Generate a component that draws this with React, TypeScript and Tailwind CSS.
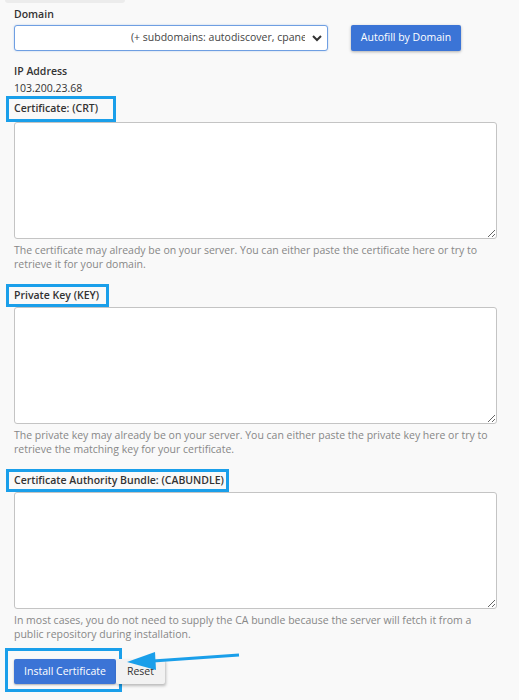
import React from 'react';

const font = { fontFamily: '"Open Sans", "Liberation Sans", sans-serif' };

interface FieldProps {
  label: string;
  boxClass: string;
  help: string[];
}

const Field: React.FC<FieldProps> = ({ label, boxClass, help }) => {
  return (
    <div>
      {/* highlighted label, drawn like the annotation in the screenshot */}
      <div className={`-ml-2 flex items-center whitespace-nowrap border-[3px] border-[#1a9fea] pl-[5px] text-[10.5px] font-semibold text-[#333] ${boxClass}`}>
        {label}
      </div>
      <textarea className="block w-[483px] h-[117px] bg-white border border-[#c4c4c4] rounded-[3px]" />
      <p className="mt-[4px] text-[10.5px] leading-[14px] text-[#878787] whitespace-nowrap">
        {help[0]}
        <br />
        {help[1]}
      </p>
    </div>
  );
};

const App: React.FC = () => {
  return (
    <div className="min-h-[700px] w-[519px] bg-[#f9f9f9] overflow-hidden" style={font}>
      <div className="ml-[5px] w-[120px] h-[3px] bg-[#ececec] rounded-b-md" />

      <div className="px-[14px]">
        <div className="mt-[3px] text-[10.5px] leading-[16px] font-semibold text-[#333]">Domain</div>

        <div className="mt-[3px] flex items-center gap-[23px]">
          <div className="w-[314px] h-[26px] flex items-center bg-white border border-[#6f9fe2] rounded-[3px] shadow-[0_0_2px_rgba(80,140,220,0.4)] text-[10.5px] text-[#444] overflow-hidden">
            <span className="w-[116px] shrink-0" />
            <span className="whitespace-nowrap overflow-hidden w-[174px]">(+ subdomains: autodiscover, cpanel, mail, webmail)</span>
            <svg width="12" height="12" viewBox="0 0 12 12" className="ml-auto mr-[4px] shrink-0">
              <path d="M2 4 L6 8 L10 4" fill="none" stroke="#333" strokeWidth="2" />
            </svg>
          </div>
          <button className="h-[26px] w-[110px] bg-[#3b74d6] text-white text-[10.5px] rounded-[2px] shadow-[0_1px_3px_rgba(0,0,0,0.3)]">
            Autofill by Domain
          </button>
        </div>

        <div className="mt-[12px] text-[10.5px] leading-[16px] font-semibold text-[#333]">IP Address</div>
        <div className="mt-[1px] text-[10.5px] leading-[16px] text-[#333]">103.200.23.68</div>

        <div className="mt-0 flex flex-col gap-[13px]">
          <Field
            label="Certificate: (CRT)"
            boxClass="w-[110px] h-[26px]"
            help={[
              'The certificate may already be on your server. You can either paste the certificate here or try to',
              'retrieve it for your domain.',
            ]}
          />
          <Field
            label="Private Key (KEY)"
            boxClass="w-[103px] h-[23px]"
            help={[
              'The private key may already be on your server. You can either paste the private key here or try to',
              'retrieve the matching key for your certificate.',
            ]}
          />
          <Field
            label="Certificate Authority Bundle: (CABUNDLE)"
            boxClass="w-[223px] h-[23px]"
            help={[
              'In most cases, you do not need to supply the CA bundle because the server will fetch it from a',
              'public repository during installation.',
            ]}
          />
        </div>

        <div className="relative mt-[7px] flex items-center">
          <div className="-ml-[9px] border-[3px] border-[#1a9fea] pl-[6px] pr-[3px] pt-[8px] pb-[5px]">
            <button className="block h-[25px] w-[102px] bg-[#3b74d6] text-white text-[10.5px] rounded-[2px] shadow-[0_1px_2px_rgba(0,0,0,0.3)]">
              Install Certificate
            </button>
          </div>
          <button className="-ml-[6px] mt-[3px] h-[25px] w-[49px] bg-[#f2f2f2] text-[#333] text-[10.5px] rounded-[2px] shadow-[1px_2px_3px_rgba(0,0,0,0.25)]">
            Reset
          </button>
          {/* annotation arrow */}
          <svg className="absolute left-[109px] top-[0px]" width="118" height="28" viewBox="0 0 118 28">
            <line x1="116" y1="7" x2="30" y2="13" stroke="#1a9fea" strokeWidth="3" />
            <polygon points="4,14 32,4 33,22" fill="#1a9fea" />
          </svg>
        </div>
      </div>
    </div>
  );
};

export default App;
